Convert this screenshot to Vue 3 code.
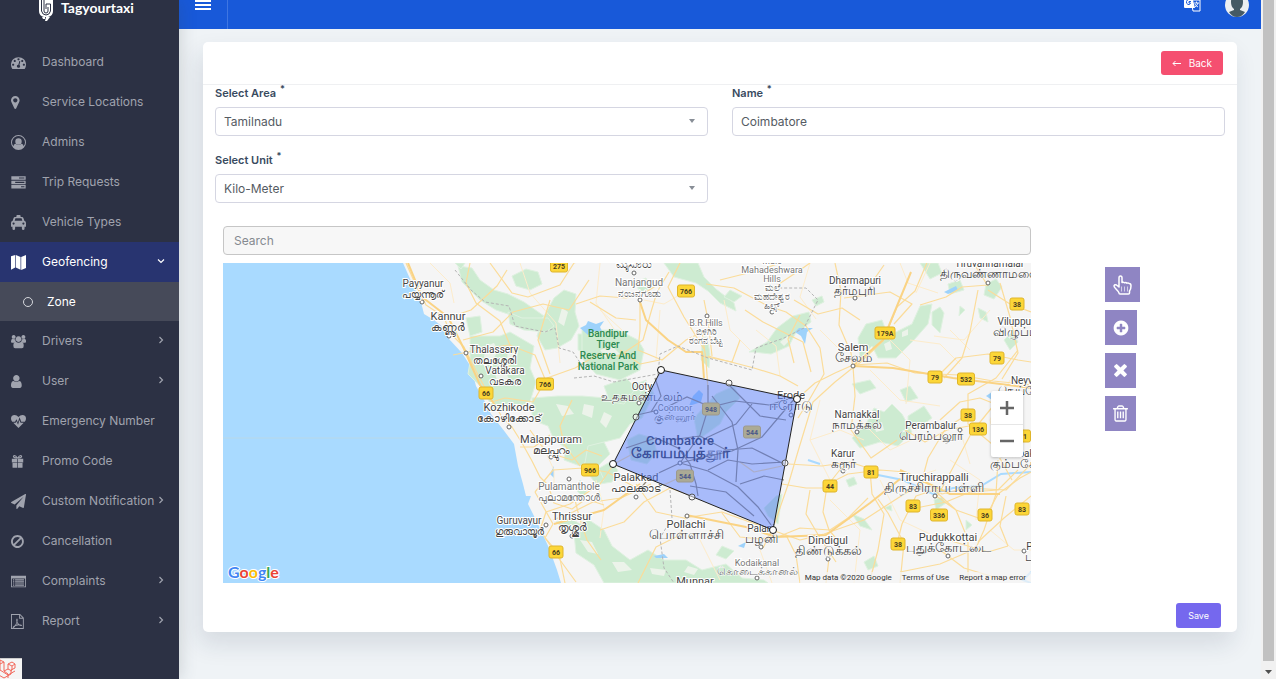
<script setup>
import { ref } from 'vue'

const icons = {
  dashboard: 'M384 1152q0-53-37.5-90.5t-90.5-37.5-90.5 37.5-37.5 90.5 37.5 90.5 90.5 37.5 90.5-37.5 37.5-90.5zm192-448q0-53-37.5-90.5t-90.5-37.5-90.5 37.5-37.5 90.5 37.5 90.5 90.5 37.5 90.5-37.5 37.5-90.5zm428 481l101-382q6-26-7.5-48.5t-38.5-29.5-48 6.5-30 39.5l-101 382q-60 5-107 43.5t-63 98.5q-20 77 20 146t117 89 146-20 89-117q16-60-6-117t-72-91zm660-33q0-53-37.5-90.5t-90.5-37.5-90.5 37.5-37.5 90.5 37.5 90.5 90.5 37.5 90.5-37.5 37.5-90.5zm-640-640q0-53-37.5-90.5t-90.5-37.5-90.5 37.5-37.5 90.5 37.5 90.5 90.5 37.5 90.5-37.5 37.5-90.5zm448 192q0-53-37.5-90.5t-90.5-37.5-90.5 37.5-37.5 90.5 37.5 90.5 90.5 37.5 90.5-37.5 37.5-90.5zm320 448q0 261-141 483-19 29-54 29h-1402q-35 0-54-29-141-221-141-483 0-182 71-348t191-286 286-191 348-71 348 71 286 191 191 286 71 348z',
  marker: 'M768 640q0-106-75-181t-181-75-181 75-75 181 75 181 181 75 181-75 75-181zm256 0q0 109-33 179l-364 774q-16 33-47.500 52t-67.500 19-67.500-19-46.500-52l-365-774q-33-70-33-179 0-212 150-362t362-150 362 150 150 362z',
  admin: 'M896 0a896 896 0 1 0 0 1792a896 896 0 1 0 0-1792zM896 128a768 768 0 0 1 622 1218q-50-270-260-300q-150 150-362 150t-362-150q-210 30-260 300A768 768 0 0 1 896 128zM896 384a384 384 0 1 0 0 768a384 384 0 1 0 0-768z',
  trips: 'M40 160h1712v420H40zM960 300v130h640V300zM40 680h1712v420H40zM500 820v130h1100V820zM40 1200h1712v420H40zM1200 1340v130h400v-130z',
  taxi: 'M680 0h430l50 230h160q120 0 160 120l110 350q200 60 200 260v440h-170v200q0 190-160 190t-160-190v-200H492v200q0 190-160 190t-160-190v-200H0V960q0-200 200-260l110-350q40-120 160-120h160zM530 400L440 700h910l-90-300zM310 900a130 130 0 1 0 0 260a130 130 0 1 0 0-260zM1480 900a130 130 0 1 0 0 260a130 130 0 1 0 0-260z',
  map: 'M0 160L500 0v1500L0 1760zM580 0l560 250v1510L580 1500zM1220 250L1792 0v1560l-572 220z',
  drivers: 'M320 120a230 230 0 1 0 1 0zM1480 120a230 230 0 1 0 1 0zM900 280a340 340 0 1 0 1 0zM0 900q0-320 200-320 120 80 290 40 20 200 130 290-140 10-240 140H110Q0 1050 0 900zM1800 900q0-320-200-320-120 80-290 40-20 200-130 290 140 10 240 140h270q110 0 110-150zM280 1400q0-460 300-460 140 120 320 120t320-120q300 0 300 460 0 300-220 300H500q-220 0-220-300z',
  user: 'M1280 1399q0 109-62.500 187t-150.500 78h-854q-88 0-150.500-78t-62.500-187q0-85 8.500-160.500t31.500-152 58.500-131 94-89 134.500-34.500q131 128 313 128t313-128q76 0 134.500 34.500t94 89 58.500 131 31.500 152 8.500 160.500zm-256-887q0 159-112.500 271.500t-271.500 112.500-271.500-112.500-112.500-271.500 112.500-271.500 271.500-112.500 271.500 112.500 112.500 271.500z',
  heart: 'M896 1660L270 1050h300l90-180 180 400 170-560 130 340h380zM150 930Q0 760 0 560 0 160 430 130q260 0 466 240 206-240 466-240 430 30 430 430 0 200-150 370h-420L1020 400l-200 620-170-400-160 310z',
  gift: 'M100 580h640v430H100zM820 580h640v430H820zM180 1090h560v560H260q-80 0-80-80zM820 1090h560v480q0 80-80 80H820zM780 540Q560 500 420 500q-200-20-200-190T400 130q260 0 380 300Q900 130 1160 130q180 10 180 180t-200 190q-140 0-360 40zM400 260q-80 50 0 110l230 20Q520 250 400 260zM1160 260q-120-10-230 130l230-20q80-60 0-110z',
  plane: 'M1764 11q33 24 27 64l-256 1536q-5 29-32 45-14 8-31 8-11 0-24-5l-453-185-242 295q-18 23-49 23-13 0-22-4-19-7-30.500-23.500t-11.500-36.500v-349l864-1059-1069 925-395-162q-37-14-40-55-2-40 32-59l1664-960q15-9 32-9 20 0 36 11z',
  ban: 'M1312 893q0-161-87-295l-754 753q137 89 297 89 111 0 211.500-43.500t173.500-116.500 116-174.500 43-212.500zm-999 299l755-754q-135-91-300-91-148 0-273 73t-198 199-73 274q0 162 89 299zm1223-299q0 157-61 300t-163.500 246-245 164-298.500 61-298.500-61-245-164-163.500-246-61-300 61-299.500 163.500-245.500 245-164 298.500-61 298.500 61 245 164 163.500 245.500 61 299.500z',
  list: 'M0 200h1792v1390H0zM100 530v950h1590V530zM240 640h150v130H240zM490 640h1060v130H490zM240 880h150v130H240zM490 880h1060v130H490zM240 1120h150v130H240zM490 1120h1060v130H490zM240 1320h150v80H240zM490 1320h1060v80H490z',
  pdf: 'M0 0h1080l450 450v1342H0zM110 110v1572h1310V560H970V110zM1080 160v290h290zM650 560h130q40 240-20 400 120 220 260 290 200-20 290 60v100q-160 50-380-60l-400 90q-150 260-300 250l-30-90q40-140 280-250 140-220 180-390-60-200-10-400zM700 1090q-40 110-90 200l230-60q-90-70-140-140z'
}

const menu = [
  { label: 'Dashboard', icon: 'dashboard' },
  { label: 'Service Locations', icon: 'marker' },
  { label: 'Admins', icon: 'admin' },
  { label: 'Trip Requests', icon: 'trips' },
  { label: 'Vehicle Types', icon: 'taxi' },
  { label: 'Geofencing', icon: 'map', open: true, children: ['Zone'] },
  { label: 'Drivers', icon: 'drivers', arrow: true },
  { label: 'User', icon: 'user', arrow: true },
  { label: 'Emergency Number', icon: 'heart' },
  { label: 'Promo Code', icon: 'gift' },
  { label: 'Custom Notification', icon: 'plane', arrow: true },
  { label: 'Cancellation', icon: 'ban' },
  { label: 'Complaints', icon: 'list', arrow: true },
  { label: 'Report', icon: 'pdf', arrow: true }
]

const area = ref('Tamilnadu')
const unit = ref('Kilo-Meter')
const name = ref('Coimbatore')
const search = ref('')

const greens = [
  'M458 266l14 2 8 12 14 10 14 4 16 8 20 14-6 6-18-4-24-8-16-10-18-18z', 'M455 263h10l-4 6z',
  'M512 276l14-7 12 3 4 12-12 6-14-4z', 'M554 298l10-8 12 4-1 18 4 14-8 14-14 8-12 2-8-14 6-18z',
  'M508 312l14 6 26 0 6 8-8 6-22-2-14-6z', 'M470 336h30l10-4 24 14-4 22 6 14-6 20-24 10-14-4-8-18-16-16 2-12z',
  'M466 318l14-2 2 16-12 4z', 'M578 334l16 0 12 10-12 12-16-6z',
  'M532 398l26-2 24 0 24 2 16-8 24-10 6 18-10 20-12 6-10 14-16 4-10 14-14 10-16-6 2-12-12-8-6-14-16-6z',
  'M582 330h36l20 10 6 10-4 20-20 10-24-6-14-16z', 'M604 386l22-8 10 10-12 16-14-2z',
  'M596 470l14-8 8 8-6 12-12 2z', 'M588 446l16-4 6 12-12 12 6 14-8 4-12-16z',
  'M556 522l14-4 10 6 6-6 18 12 8 16 18 14 18-10 16 10 22 0 16 10 24-6 16 14 22 2 4 3H604l-10-18-18-12-2-20-14-8z',
  'M694 418l22-24 18-8 6 12-14 14-6 12-22 16z', 'M627 440l12-6 14 4 4 14-10 12-16-4z',
  'M664 263h34l6 14 12 12 18 14 2 8-16-8-12-12-12-8-22-6z', 'M636 282l10-4 4 10-10 6z',
  'M702 340l5-4 3 18-1 14-8-8z', 'M749 352l18-10 10-14 16-12 16-4 2 10-16 12-6 12-18 8-18-2z',
  'M730 290l12 6-8 6-10-5z', 'M764 508l12-12 6-2-4 30-10-8z',
  'M858 338l8-14 16-4 6 16 24-12 8-18 12-2-4 20-14 16-18 18-18 0-6-12-12 12z',
  'M932 312l8-5 4 6-4 20-8-8z', 'M920 263h18l4 10-12 6z', 'M948 284l12-4 4 10-14 4z',
  'M884 412l8-8 10 10 10 18-14 14-18-4-20 6-8-10 14-14 8-16z', 'M900 390l10-4 8 12-12 4z',
  'M852 384l18-4 6 8-16 6z', 'M986 284l10-5 6 8-8 12-10-4z', 'M1004 340l8-8 6 10-8 8z',
  'M908 416l16-10 8 12-16 12-8-4z', 'M852 514l12 5 8 11-12-4z', 'M864 562l10-6 4 10-10 4z',
  'M934 500l8-3 4 6-10 7z', 'M978 308l8 4 2 10-8-4z', 'M966 520l6 5-6 5z',
  'M580 480l8 8-4 10-8-8z', 'M640 392l10-6 4 8-8 6z', 'M722 546l12 5-8 8-10-4z',
  'M960 306l5 4-6 6zM812 300l10-4 2 6-8 4zM846 480l8-3 3 7-8 3zM884 508l7-3 1 6z'
]

const clearings = [
  'M486 346l8-3 4 8-6 10-8-4zM508 348l10 4-2 10-9-2zM494 370l12 2 4 10-12 2zM562 308l6 4-4 14-6-4z',
  'M556 404l12 2 6 8-12 2zM584 404l10 2-2 12-10-4zM604 412l8 4-6 12-6-6zM580 540l12 2 6 12-10-2zM612 562l12 0 8 8-14 2zM650 568l16 2-2 6-12-2zM688 566l10 3-4 6-10-3z',
  'M884 344l6-3 2 8-6 2zM902 332l6-3 0 6-6 2zM874 424l8-2 2 8-8 2zM780 342l8-6 2 4-6 6zM600 350l12-4 8 8-14 4z'
]

const roads = [
  'M406 263l8 18 12 24 18 12 6 16 14 14 14 28 12 22 12 20 10 10 10 16 10 18 8 16 8 8 6 18 18 6 14-10 18 6',
  'M447 318l24-8 26-24 10-16M463 340l30-8 20-20 30-8 26 6 20-30M485 404l20-6 28 4 14-24 28-10 24-14 20 2 24-16 8-28 6-20 12-20',
  'M470 263l-4 20 10 20 24 18 14 34-8 20M490 263l22 30 16 4 32-12 14-22 12-4M550 300l-12 40 12 34M453 355l30-6 26-4 26 10 10 24',
  'M640 300v30l-2 20 24 10 24-20 16-8 4 28 2 30M662 282l-16 10-20 6-26-2-24 8M680 263l-12 24 16 30 20 32M704 300l4 20 4 36M708 356l46 12 26 8 18 10',
  'M706 284l28 4 34 18 18 6 20 14 14 22 4 26-16 28-10 16M745 310l18 12 40 20 8 30M797 399l18-16 20-10 18-8 34-2 28 10 44 2 34 6 40 4 16 2',
  'M835 263l6 28-2 34 12 28 2 16 30-28 14-34 18-16 16-38M844 298l46-6 22 12-18 20M870 285l14-20M853 366l2 30-4 34 20 28 26-18',
  'M855 366l-20 16-22 20-14 46-10 34-16 46-10 20M988 290l22 14 21 8M988 286l-14-22M920 305l26-8 16-10 26-2M978 290l-8 42-8 26-18 20M1000 283l10 34 8 36-16 26',
  'M934 380l22-22 32-4 30 6 13 2M1018 350l-22 28-28 16 0 30 24 20 20 36M968 414l-22 14-18 30-8 30M998 400l-26 32-30 56-6 10',
  'M640 450l-26 14-14 20-30 20-24 8-6 18 20 30 16 22M575 500l4 16 8 24 14 20M535 492l18-22 30-2 24 4 26 14 24 2 26-12',
  'M535 492l18 32-8 14 14 16 6 29M553 520l20-8 20-10 28-4 30-14M530 430l16 22 26 8 14-10 16 6M550 435l-16 12-14 0M572 400l-12 26 4 18 16 22',
  'M600 530l24-8 20-20 26-14 22 8M636 484l20 28 28 6 38-6 50 18 28 10 24-6 40-14 34-22 26-16',
  'M686 515l-6 20-24 12-18 36M722 513l18 24 20 2 26-4 10 20 4 28M780 536l20-8 30 2 18-12 20-20',
  'M828 484l20-10 32-4 26 2 22 12 14 10 24-6 40 2 25-26M843 466l-16 20-4 26 6 18 10 12M870 470l2 24 12 20-6 36-8 30',
  'M788 464l34 2 28-4 24 8M782 484l24 4 24 0M740 462l14 10 28-6M896 548l6-24 14-28 18-6 22 20 12 30 0 40M936 496l20 14 28 10 14-26 22-16 11-6',
  'M968 552l-28 12-40 8M940 550l24 18 40 12M948 540l40 12 20-6M978 542l26-24 27-22M916 508l30-6 24-10 28-2 20-20M1008 546l-8-20 6-30',
  'M810 490l-4 24 14 24 16 24M830 550l-4 33M900 583l4-40-16-30-10-14M998 460l-2 34-12 36-8 18M940 420l20-18 20-4 20 8M905 430l20 12 22-12 22-4',
  'M636 320l-20-2-26-16M620 350l20 14 20-4M740 340l-8 22-30-6M720 280l40-10 20-7M770 290l30-20 10-7M860 320l-18-12-24 6-24-14M800 315l-12 24 6 24'
]

const zoneRoads = [
  'M637 415l26-6 24-12 24 10 24-6 34 4 26-8', 'M655 378l6 18-10 16M626 448l30-10 22 10 12 16 6 20 2 12',
  'M680 463l24-6 28-6 30-14 22-26 12-14', 'M680 463l28 8 30 16 20 20 16 22M680 463l-30 14-10 12',
  'M680 463l20-28 8-26 0-24M700 436l26 14 26-2 32 16M712 396l20 26 6 28-2 32M752 404l-16 20-30 14M730 386l30 30 26 4M708 470l20-10 24 4 32-2M740 484l24-8 20 4M690 486l36 6 28 24M670 440l30-4'
]

const minorRoads = [
  'M430 263l20 20 4 20M520 263l10 30 26 30 4 40M600 263l-4 40 18 26M756 330l20 16 4 30M810 263l-10 34 16 22M880 330l30 30-4 44M910 340l30 4 20 20M990 310l-26 30-30-4M820 400l-10 40 20 40M860 420l30 30 30-14M880 480l20 40 30 14M830 500l30 30-6 53M950 460l30 20-4 40M990 530l24 20 17 0M700 540l20 40M760 550l12 33M540 440l14 30 0 20M596 480l8 28-4 30M930 263l-14 30M870 370l30 30 40 6M1010 380l-20 40 10 40',
  'M644 300l20 4 24-14M600 310l22 20M660 310l-4 50M724 300l6 30 20 20M900 263l8 20 30 10M950 330l20 20M820 330l20 20M810 440l30-10 24 10M960 430l10 34M906 480l30-10'
]

const waters = [
  'M580 328l6-3 2-4 8 3 8-3-4 6 2 4-8 0-6 4z', 'M795 332l4-4 14 0-6 4-2 12-4-8z', 'M944 292l12-6 2 4-10 4z',
  'M693 396l6-6 4 4-2 8-12 4z', 'M654 556l10-2 4 4-12 0z', 'M738 546l8-4-2 6z', 'M550 474l4-8 0 12z', 'M986 396l6-4 6 2-6 6z'
]

// x, y: first text line; dx, dy: town marker; s: text size; lh: line height
const places = [
  { t: ['Payyanur', 'പയ്യന്നൂര്'], x: 423, y: 287, dx: 422, dy: 302 },
  { t: ['Kannur', 'കണ്ണൂർ'], x: 448, y: 320, dx: 449, dy: 336, s: 11 },
  { t: ['Thalassery', 'തലശ്ശേരി'], x: 494, y: 353, dx: 466, dy: 353, s: 10 },
  { t: ['Vatakara', 'വടകര'], x: 505, y: 374, dx: 481, dy: 376 },
  { t: ['Kozhikode', 'കോഴിക്കോട്'], x: 509, y: 411, dx: 509, dy: 427, s: 11 },
  { t: ['Malappuram', 'മലപ്പുറം'], x: 551, y: 443, dx: 551, dy: 457, s: 11 },
  { t: ['Pulamanthole', 'പുലാമന്തോൾ'], x: 569, y: 490, dx: 569, dy: 479, soft: true },
  { t: ['Guruvayur', 'ഗുരുവായൂർ'], x: 519, y: 524, dx: 546, dy: 525 },
  { t: ['Thrissur', 'തൃശ്ശൂർ'], x: 572, y: 520, dx: 572, dy: 536, s: 11 },
  { t: ['Palakkad', 'പാലക്കാട്'], x: 636, y: 481, dx: 636, dy: 497, s: 11 },
  { t: ['ಮೈಸೂರು'], x: 634, y: 268, dx: 634, dy: 273, s: 12 },
  { t: ['Nanjangud', 'ನಂಜನಗೂಡು'], x: 639, y: 286, dx: 640, dy: 300, soft: true },
  { t: ['Male', 'Mahadeshwara', 'Hills', 'ಮಲೆ', 'ಮಹದೇಶ್ವರ', 'ಹಿಲ್ಸ್'], x: 772, y: 264, dx: 772, dy: 312, soft: true, s: 9, lh: 9 },
  { t: ['B.R.Hills', 'ಬಿಳಿಗಿರಿ', 'ರಂಗನ ಬೆಟ್ಟ'], x: 706, y: 326, dx: 707, dy: 316, soft: true, s: 9, lh: 9 },
  { t: ['Dharmapuri', 'தர்மபுரி'], x: 855, y: 284, dx: 855, dy: 298 },
  { t: ['Tiruvannamalai', 'திருவண்ணாமலை'], x: 989, y: 267, dx: 988, dy: 283 },
  { t: ['Viluppuram', 'விழுப்புரம்'], x: 1023, y: 325 },
  { t: ['Salem', 'சேலம்'], x: 853, y: 351, dx: 853, dy: 366, s: 11 },
  { t: ['Neyveli', 'நெய்வேலி'], x: 1027, y: 384 },
  { t: ['Namakkal', 'நாமக்கல்'], x: 857, y: 418, dx: 857, dy: 432 },
  { t: ['Perambalur', 'பெரம்பலூர்'], x: 931, y: 429, dx: 960, dy: 430 },
  { t: ['Karur', 'கரூர்'], x: 843, y: 457, dx: 843, dy: 471 },
  { t: ['Tiruchirappalli', 'திருச்சிராப்பள்ளி'], x: 934, y: 481, dx: 935, dy: 496, s: 11 },
  { t: ['Kumbakonam', 'கும்பகோணம்'], x: 1029, y: 457 },
  { t: ['Pudukkottai', 'புதுக்கோட்டை'], x: 948, y: 541, dx: 948, dy: 556, s: 11 },
  { t: ['Dindigul', 'திண்டுக்கல்'], x: 828, y: 544, dx: 828, dy: 559, s: 11 },
  { t: ['Pa', 'பா'], x: 1032, y: 550, dx: 1024, dy: 551 },
  { t: ['Palani', 'பழனி'], x: 761, y: 532, dx: 761, dy: 547 },
  { t: ['Kodaikanal', 'கொடைக்கானல்'], x: 757, y: 566, dx: 757, dy: 578, soft: true, s: 9, lh: 9 },
  { t: ['Pollachi', 'பொள்ளாச்சி'], x: 686, y: 528, dx: 687, dy: 516, s: 11 },
  { t: ['Munnar'], x: 695, y: 585, s: 11 },
  { t: ['Ooty', 'உதகமண்டலம்'], x: 642, y: 390, dx: 639, dy: 403 },
  { t: ['Coonoor', 'குன்னூர்'], x: 675, y: 411, dx: 656, dy: 412, soft: true, s: 9, lh: 9 },
  { t: ['Erode', 'ஈரோடு'], x: 791, y: 399, dx: 791, dy: 415, s: 11 },
  { t: ['Coimbatore', 'கோயம்புத்தூர்'], x: 680, y: 445, dx: 680, dy: 463, s: 13, lh: 13, strong: true }
]

// Tamil glyphs are drawn smaller than Latin ones at the same size
const isTamil = line => /[\u0B80-\u0BFF]/.test(line)
const lineSize = (place, line) => (place.s || 10) + (isTamil(line) ? 2 : 0)

const shields = [
  [559, 266, '275'], [686, 291, '766'], [545, 384, '766'], [486, 393, '66'], [590, 470, '966'], [556, 552, '66'],
  [885, 333, '179A'], [1017, 304, '38'], [997, 358, '79'], [935, 377, '79'], [966, 379, '532'], [968, 415, '38'],
  [978, 429, '136'], [1025, 436, '1'], [871, 472, '81'], [830, 486, '44'], [913, 506, '83'], [939, 515, '336'],
  [985, 515, '36'], [1022, 509, '83'], [898, 544, '38'], [711, 409, '948'], [752, 432, '544'], [685, 476, '544']
]

const corners = [[661, 370], [797, 399], [773, 530], [613, 464]]
const mids = [[729, 383], [785, 463], [692, 497], [636, 417]]
const zone = corners.map(p => p.join(',')).join(' ')
const shieldWidth = t => 8 + t.length * 3
</script>

<template>
  <div class="app">
    <aside class="sidebar">
      <div class="brand">
        <svg class="brand-mark" viewBox="0 0 14 21" aria-hidden="true">
          <path d="M0 0v11q0 5 5 6h4q5-1 5-6V0z" fill="#fff" />
          <path d="M5 0v11q0 2 2 2t2-2V7M2.500 0v11q1 4 4.500 4t4.500-4V4H7v5" fill="none" stroke="#2c3144" stroke-width="1" />
          <path d="M3 17h3v2H4zM7 17h4l-3 4H6z" fill="#fff" />
        </svg>
        <span>Tagyourtaxi</span>
      </div>
      <nav class="menu">
        <template v-for="item in menu" :key="item.label">
          <a href="#" class="item" :class="{ open: item.open }">
            <svg class="item-icon" viewBox="0 0 1792 1792" aria-hidden="true">
              <path :d="icons[item.icon]" fill="currentColor" fill-rule="evenodd" />
            </svg>
            <span class="item-label">{{ item.label }}</span>
            <svg v-if="item.arrow || item.open" class="chevron" viewBox="0 0 8 8" aria-hidden="true">
              <path :d="item.open ? 'M1 2.500l3 3 3-3' : 'M2.500 1l3 3-3 3'" fill="none" stroke="currentColor" stroke-width="1.200" />
            </svg>
          </a>
          <a v-for="child in item.children" :key="child" href="#" class="child">
            <span class="ring"></span>{{ child }}
          </a>
        </template>
      </nav>
      <div class="debug">
        <svg viewBox="0 0 22 20" aria-hidden="true">
          <path d="M-3 3l4-2 4 2v9l4-2V5l4-2 3 2v4l-4 2v4l-7 4-7-4zM1 1v10l8 5 7-4M5 3L1 5M9 5l4 2 3-2M9 10l4 2M13 7v4M5 12l4 3v4" transform="translate(-1)" fill="none" stroke="#f2685c" stroke-width="1" />
        </svg>
      </div>
    </aside>

    <div class="page">
      <header class="topbar">
        <button class="burger" aria-label="Toggle menu"><i></i><i></i><i></i></button>
        <div class="top-actions">
          <button class="plain language" aria-label="Language">
            <svg width="17" height="16" viewBox="0 0 17 16" aria-hidden="true">
              <path d="M7 4h9v11H9z" fill="none" stroke="#fff" />
              <path d="M0 0h8l3 12H1q-1 0-1-1z" fill="#fff" />
              <path d="M7 5.500H5V7h1.500q-.5 2-2.500 1.500-2-1-1.500-3T5.500 3" fill="none" stroke="#1859d9" />
              <path d="M10 7h5M12.500 5.500V7M14 7q-1 3-3 4M11 8q1 2 3 3" fill="none" stroke="#fff" stroke-width=".9" />
            </svg>
          </button>
          <button class="plain" aria-label="Account">
            <svg width="24" height="24" viewBox="0 0 24 24" aria-hidden="true">
              <circle cx="12" cy="12" r="12" fill="#eceff1" />
              <path d="M12 2q6 0 6 7 0 5-3 7v1l5 2q-3 5-8 5t-8-5l5-2v-1q-3-2-3-7 0-7 6-7z" fill="#455a64" />
            </svg>
          </button>
        </div>
      </header>

      <main class="content">
        <section class="card">
          <div class="card-head">
            <a href="#" class="back">
              <svg width="9" height="7" viewBox="0 0 9 7" aria-hidden="true"><path d="M9 3.500H1M3.500 1L1 3.500 3.500 6" fill="none" stroke="#fff" /></svg>
              Back
            </a>
          </div>
          <form class="form" @submit.prevent>
            <div class="fields">
              <div class="field">
                <label for="area">Select Area <sup>*</sup></label>
                <div class="select">
                  <select id="area" v-model="area"><option>Tamilnadu</option></select>
                  <span class="caret"></span>
                </div>
              </div>
              <div class="field">
                <label for="name">Name <sup>*</sup></label>
                <input id="name" v-model="name" type="text">
              </div>
              <div class="field">
                <label for="unit">Select Unit <sup>*</sup></label>
                <div class="select">
                  <select id="unit" v-model="unit"><option>Kilo-Meter</option></select>
                  <span class="caret"></span>
                </div>
              </div>
            </div>

            <div class="map-row">
              <div>
                <input v-model="search" class="search" type="text" placeholder="Search" aria-label="Search">
                <div class="map">
                  <svg class="map-art" viewBox="223 263 808 320" role="img" aria-label="Map of the Coimbatore zone">
                    <path d="M223 263h808v320H223z" fill="#a9daff" />
                    <path d="M223 438h288" stroke="#b8d8e8" />
                    <path d="M403 263l8 18 10 21 3 12 10 6 10 8 5 11 13 14 9 14 5 19 7 12 8 16 14 18 9 12 4 22 5 18 3 12 5 0-3 8 9 18 12 26 8 22 4 13h470V263z" fill="#f5f5f5" />
                    <path v-for="d in greens" :key="d" :d="d" class="green" />
                    <path v-for="d in clearings" :key="d" :d="d" fill="#ecf3ea" />
                    <path v-for="d in waters" :key="d" :d="d" fill="#9dd2fb" />
                    <path d="M1031 472l-30 2-20 12-28 2-20 6-30-14-30-6M820 464l-12-4M1031 572l-8 8 8 3" fill="none" stroke="#a9daff" stroke-width="2" />
                    <path v-for="d in minorRoads" :key="d" :d="d" fill="none" stroke="#fdeccb" stroke-width="1" />
                    <path v-for="d in roads" :key="d" :d="d" class="road" />
                    <path d="M408 263l14 34 26 20 16 32 16 36 18 24M640 302l6 18 22 20 18 12 16 0 2 26M853 366l40 2 60 10 78 10M853 366l30-26 14-34 14-34M900 470l50 24 50 0M640 484l-36 26-50 14M686 515l60 12 30 10 50-2 44-32 30-24" class="highway" />
                    <path d="M455 270l16 20 14 12 24 4 6 20 30 6 10-4 4 20 14 4 8 12 22 4M574 378l20-2 20 6 44-8 2-20 18-8 30 12 44 12 4-22 28-10 20-10 14-28-12-12-30 0M670 490l2 28-12 20 4 30 10 15" class="border" />
                    <path v-for="d in zoneRoads" :key="d" :d="d" fill="none" stroke="#8f8673" stroke-width="1.200" />
                    <g class="park">
                      <text x="608" y="337">Bandipur</text>
                      <text x="608" y="348">Tiger</text>
                      <text x="608" y="359">Reserve And</text>
                      <text x="608" y="370">National Park</text>
                    </g>
                    <g v-for="s in shields" :key="s.join()">
                      <rect :x="s[0] - shieldWidth(s[2]) / 2" :y="s[1] - 6" :width="shieldWidth(s[2])" height="12" rx="2" fill="#fcd638" stroke="#dfb52c" />
                      <text :x="s[0]" :y="s[1] + 3" class="shield">{{ s[2] }}</text>
                    </g>
                    <g v-for="p in places" :key="p.t[0]" class="place" :class="{ soft: p.soft, strong: p.strong }">
                      <circle v-if="p.dx" :cx="p.dx" :cy="p.dy" r="2" />
                      <text v-for="(line, i) in p.t" :key="line" :x="p.x" :y="p.y + i * (p.lh || 11)" :font-size="lineSize(p, line)" :class="{ tamil: isTamil(line) }">{{ line }}</text>
                    </g>
                    <polygon :points="zone" fill="#5079ff" fill-opacity=".47" stroke="#222" stroke-width="1" />
                    <circle v-for="c in mids" :key="c.join()" :cx="c[0]" :cy="c[1]" r="3" fill="#fff" fill-opacity=".5" stroke="#555" />
                    <circle v-for="c in corners" :key="c.join()" :cx="c[0]" :cy="c[1]" r="3.500" fill="#fff" stroke="#111" />
                    <text x="228" y="578" class="google"><tspan fill="#4285f4">G</tspan><tspan fill="#ea4335">o</tspan><tspan fill="#fbbc05">o</tspan><tspan fill="#4285f4">g</tspan><tspan fill="#34a853">l</tspan><tspan fill="#ea4335">e</tspan></text>
                  </svg>
                  <div class="zoom">
                    <button type="button" aria-label="Zoom in"><svg width="14" height="14" viewBox="0 0 14 14"><path d="M7 0v14M0 7h14" stroke="#666" stroke-width="2.500" /></svg></button>
                    <button type="button" aria-label="Zoom out"><svg width="14" height="14" viewBox="0 0 14 14"><path d="M0 7h14" stroke="#666" stroke-width="2.500" /></svg></button>
                  </div>
                  <div class="credits">
                    <span>Map data ©2020 Google</span>
                    <a href="#">Terms of Use</a>
                    <a href="#">Report a map error</a>
                  </div>
                </div>
              </div>
              <div class="tools">
                <button type="button" aria-label="Select">
                  <svg width="19" height="20" viewBox="0 0 19 20" aria-hidden="true">
                    <path d="M6 12V3q0-2 1.500-2T9 3v4.500q1.500-.8 2.500.3 1.500-.8 2.500.4 1.200-.6 2.300.3 1.700 0 1.700 2.500 0 3-1.500 5V18q0 1-1 1H7q-1 0-1-1-.5-1.500-3-4-2-2-2-3 .5-2 2.500-1z" fill="none" stroke="#fff" stroke-width="1.500" stroke-linejoin="round" />
                    <path d="M8.500 11.500v5M11.500 11.500v5M14.500 11.500v5" stroke="#fff" stroke-opacity=".6" />
                  </svg>
                </button>
                <button type="button" aria-label="Add">
                  <svg width="16" height="20" viewBox="64 -96 1664 1984" aria-hidden="true"><path fill="#fff" d="M1344 960v-128q0-26-19-45t-45-19h-256v-256q0-26-19-45t-45-19h-128q-26 0-45 19t-19 45v256h-256q-26 0-45 19t-19 45v128q0 26 19 45t45 19h256v256q0 26 19 45t45 19h128q26 0 45-19t19-45v-256h256q26 0 45-19t19-45zm320-64q0 209-103 385.500t-279.500 279.500-385.500 103-385.500-103-279.500-279.500-103-385.500 103-385.500 279.500-279.500 385.500-103 385.500 103 279.500 279.500 103 385.500z" /></svg>
                </button>
                <button type="button" aria-label="Remove">
                  <svg width="15" height="20" viewBox="200 80 1392 1856" aria-hidden="true"><path fill="#fff" d="M1490 1322q0 40-28 68l-136 136q-28 28-68 28t-68-28l-294-294-294 294q-28 28-68 28t-68-28l-136-136q-28-28-28-68t28-68l294-294-294-294q-28-28-28-68t28-68l136-136q28-28 68-28t68 28l294 294 294-294q28-28 68-28t68 28l136 136q28 28 28 68t-28 68l-294 294 294 294q28 28 28 68z" /></svg>
                </button>
                <button type="button" aria-label="Delete">
                  <svg width="15" height="20" viewBox="192 0 1408 1877" aria-hidden="true"><path fill="#fff" d="M704 736v576q0 14-9 23t-23 9h-64q-14 0-23-9t-9-23v-576q0-14 9-23t23-9h64q14 0 23 9t9 23zm256 0v576q0 14-9 23t-23 9h-64q-14 0-23-9t-9-23v-576q0-14 9-23t23-9h64q14 0 23 9t9 23zm256 0v576q0 14-9 23t-23 9h-64q-14 0-23-9t-9-23v-576q0-14 9-23t23-9h64q14 0 23 9t9 23zm128 724v-948h-896v948q0 22 7 40.500t14.500 27 10.500 8.500h832q3 0 10.500-8.500t14.500-27 7-40.500zm-672-1076h448l-48-117q-7-9-17-11h-317q-10 2-17 11zm928 32v64q0 14-9 23t-23 9h-96v948q0 83-47 143.500t-113 60.500h-832q-66 0-113-58.500t-47-141.500v-952h-96q-14 0-23-9t-9-23v-64q0-14 9-23t23-9h309l70-167q15-37 54-63t79-26h320q40 0 79 26t54 63l70 167h309q14 0 23 9t9 23z" /></svg>
                </button>
              </div>
            </div>

            <div class="actions"><button type="submit" class="save">Save</button></div>
          </form>
        </section>
      </main>
    </div>

    <div class="scrollbar" aria-hidden="true">
      <div class="thumb"></div>
      <svg width="7" height="4" viewBox="0 0 7 4"><path d="M0 0h7L3.500 4z" fill="#505050" /></svg>
    </div>
  </div>
</template>

<style>
body {
  background: #eff3f6;
}
</style>

<style scoped>
* {
  box-sizing: border-box;
}

.app {
  display: flex;
  height: 100vh;
  overflow: hidden;
  font-family: Inter, "Open Sans", sans-serif;
  font-size: 12px;
  color: #475f7b;
}

a {
  text-decoration: none;
}

button {
  border: 0;
  font: inherit;
  cursor: pointer;
}

.sidebar {
  position: relative;
  flex: 0 0 179px;
  background: #2c3144;
  box-shadow: 1px 0 16px rgba(60, 70, 80, 0.2);
  z-index: 1;
}

.brand {
  display: flex;
  align-items: flex-start;
  gap: 8px;
  height: 42px;
  padding-left: 39px;
  color: #fff;
  font-family: Lato, sans-serif;
  font-weight: 700;
  font-size: 14px;
  line-height: 15px;
}

.brand-mark {
  width: 14px;
  height: 21px;
}

.item {
  display: flex;
  align-items: center;
  height: 40px;
  padding: 0 14px 0 11px;
  color: #a0a3ae;
}

.item.open {
  background: #283470;
  color: #fff;
}

.item-icon {
  flex: none;
  width: 15px;
  height: 15px;
  margin-right: 16px;
}

.item-label {
  flex: 1;
  padding-bottom: 2px;
  white-space: nowrap;
}

.chevron {
  flex: none;
  width: 8px;
  height: 8px;
  margin-bottom: 2px;
}

.child {
  display: flex;
  align-items: center;
  gap: 14px;
  height: 39px;
  padding-left: 23px;
  background: #464a59;
  color: #fff;
}

.ring {
  width: 10px;
  height: 10px;
  border: 1px solid #d5d7dc;
  border-radius: 50%;
}

.debug {
  position: absolute;
  left: 0;
  bottom: 0;
  width: 22px;
  height: 21px;
  background: #f5f5f5;
  border-top: 1px solid #ccc;
}

.debug svg {
  display: block;
  width: 22px;
  height: 20px;
}

.page {
  flex: 1;
  min-width: 0;
}

.topbar {
  display: flex;
  justify-content: space-between;
  height: 29px;
  background: #1859d9;
}

.burger {
  display: flex;
  flex-direction: column;
  align-items: center;
  justify-content: flex-start;
  gap: 2px;
  width: 49px;
  padding: 0;
  background: none;
  border-right: 1px solid #3f76e2;
}

.burger i {
  width: 16px;
  height: 2px;
  background: #fff;
}

.top-actions {
  display: flex;
  align-items: flex-start;
  gap: 24px;
  padding-right: 12px;
}

.plain {
  display: flex;
  align-items: flex-end;
  height: 17px;
  padding: 0;
  background: none;
}

.plain.language {
  height: 12px;
}

.content {
  padding: 13px 24px 47px;
}

.card {
  background: #fff;
  border-radius: 5px;
  box-shadow: -4px 12px 24px rgba(25, 42, 70, 0.12);
}

.card-head {
  display: flex;
  justify-content: flex-end;
  align-items: center;
  height: 43px;
  padding: 0 14px;
  border-bottom: 1px solid #eff0f2;
}

.back {
  display: flex;
  align-items: center;
  gap: 8px;
  height: 24px;
  padding: 0 11px;
  border-radius: 3px;
  background: #f54f70;
  color: #fff;
  font-size: 10px;
}

.form {
  padding: 0 12px 4px;
}

.fields {
  display: grid;
  grid-template-columns: 1fr 1fr;
  gap: 16px 24px;
}

.field {
  display: flex;
  flex-direction: column;
}

label {
  height: 22px;
  line-height: 16px;
  font-size: 11px;
  font-weight: 600;
  color: #394a60;
}

sup {
  margin-left: 1px;
  line-height: 0;
}

select,
input {
  display: block;
  width: 100%;
  height: 29px;
  padding: 0 8px;
  border: 1px solid #d5d6e2;
  border-radius: 4px;
  background: #fff;
  color: #555b63;
  font: inherit;
  appearance: none;
}

.select {
  position: relative;
}

.caret {
  position: absolute;
  right: 13px;
  top: 12px;
  border: 3px solid transparent;
  border-top: 4px solid #888e96;
  border-bottom: 0;
  pointer-events: none;
}

.map-row {
  display: grid;
  grid-template-columns: minmax(0, 1fr) 120px;
  gap: 74px;
  padding: 23px 0 0 8px;
}

.search {
  height: 29px;
  padding: 0 10px;
  border-color: #c6c6c6;
  background: #f7f7f7;
  font-size: 12px;
}

.search::placeholder {
  color: #858a90;
}

.map {
  position: relative;
  margin-top: 8px;
}

.map-art {
  display: block;
  width: 100%;
  font-family: Roboto, "Noto Sans", sans-serif;
}

.green {
  fill: #cdebd1;
  stroke: #dff1e0;
  stroke-width: 1;
  stroke-linejoin: round;
}

.road {
  fill: none;
  stroke: #fbdc9a;
  stroke-width: 1.2;
  stroke-linejoin: round;
}

.highway {
  fill: none;
  stroke: #fad384;
  stroke-width: 2;
  stroke-linejoin: round;
}

.border {
  fill: none;
  stroke: #b4b4b4;
  stroke-dasharray: 3 2;
}

.map-art text {
  text-anchor: middle;
}

.place text {
  fill: #454545;
  stroke: #fff;
  stroke-width: 2px;
  paint-order: stroke;
}

.place .tamil {
  stroke-width: 1px;
  font-weight: 500;
}

.place.soft text {
  fill: #777;
}

.place.strong text {
  fill: #2a2f45;
  stroke: none;
  font-weight: 500;
}

.place.strong .tamil {
  font-weight: 700;
}

.place circle {
  fill: #fff;
  stroke: #666;
}

.park text {
  fill: #2c8a50;
  font-size: 10px;
  font-weight: 500;
}

.map-art .shield {
  fill: #4a4020;
  font-size: 7px;
  font-weight: 700;
}

.map-art .google {
  text-anchor: start;
  font-family: Lato, sans-serif;
  font-size: 16px;
  font-weight: 700;
  stroke: #fff;
  stroke-width: 2px;
  paint-order: stroke;
}

.zoom {
  position: absolute;
  right: 8px;
  top: 128px;
  width: 32px;
  background: #fff;
  border-radius: 2px;
  box-shadow: 0 1px 3px rgba(0, 0, 0, 0.25);
}

.zoom button {
  display: flex;
  align-items: center;
  justify-content: center;
  width: 32px;
  height: 33px;
  padding: 0;
  background: none;
}

.zoom button + button {
  border-top: 1px solid #e6e6e6;
}

.credits {
  position: absolute;
  right: 0;
  bottom: 0;
  display: flex;
  gap: 10px;
  padding: 0 5px;
  background: rgba(245, 245, 245, 0.7);
  font-family: Roboto, sans-serif;
  font-size: 8px;
  line-height: 11px;
  color: #333;
}

.credits a {
  color: inherit;
}

.tools {
  display: flex;
  flex-direction: column;
  align-items: flex-start;
  gap: 8px;
  padding-top: 41px;
}

.tools button {
  display: flex;
  align-items: center;
  height: 35px;
  padding: 0 8px;
  background: #8f85c3;
}

.actions {
  display: flex;
  justify-content: flex-end;
  padding: 20px 4px 0 0;
}

.save {
  height: 25px;
  padding: 0 12px;
  border-radius: 3px;
  background: #7568ee;
  color: #fff;
  font-size: 9px;
}

.scrollbar {
  flex: 0 0 15px;
  display: flex;
  flex-direction: column;
  align-items: center;
  padding-bottom: 5px;
  background: #f1f1f1;
}

.thumb {
  flex: 1;
  width: 11px;
  margin-bottom: 9px;
  background: #c1c1c1;
}
</style>
